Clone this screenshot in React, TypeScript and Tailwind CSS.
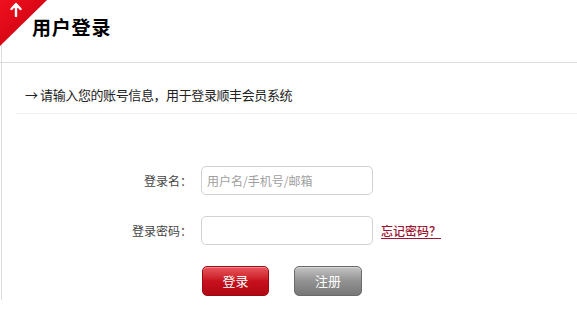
const font = { fontFamily: '"Noto Sans CJK SC", sans-serif' }

function Corner() {
  return (
    <div className="absolute left-0 top-0 w-[47px] h-[46px] bg-gradient-to-br from-[#f0101e] to-[#c3000d] [clip-path:polygon(0_0,100%_0,0_100%)]">
      <svg width="12" height="14" viewBox="0 0 12 14" className="absolute left-[10px] top-[3px]">
        <path d="M6 1 L1.5 6 M6 1 L10.5 6 M6 1 V13" stroke="#fff" strokeWidth="2.4" fill="none" strokeLinecap="round" />
      </svg>
    </div>
  )
}

function Field({ label, placeholder, extra }: { label: string; placeholder?: string; extra?: React.ReactNode }) {
  return (
    <div className="flex items-center">
      <span className="w-[190px] text-right text-[12px] text-[#444]">{label}</span>
      <input
        className="ml-[9px] w-[172px] h-[29px] rounded-[5px] border border-[#d2d2d2] bg-white px-[5px] text-[12px] text-[#333] placeholder:text-[#a0a0a0] outline-none"
        placeholder={placeholder}
      />
      {extra}
    </div>
  )
}

export default function App() {
  return (
    <div lang="zh-CN" className="relative w-[577px] h-[313px] bg-white overflow-hidden" style={font}>
      <div className="h-[300px] border-l border-[#dcdcdc] ml-[1px]">
        <div className="h-[63px] border-b border-[#dcdcdc] -ml-[2px] flex items-center pl-[32px] pb-[7px]">
          <h1 className="text-[19px] font-bold text-black tracking-[0.8px]">用户登录</h1>
        </div>

        <p className="pt-[22px] pl-[23px] text-[13px] tracking-[-0.4px] leading-[20px] text-[#222]">→ 请输入您的账号信息，用于登录顺丰会员系统</p>
        <div className="mt-[8px] ml-[14px] h-px bg-[#eeeeee]" />

        <div className="mt-[52px] flex flex-col gap-[21px]">
          <Field label="登录名：" placeholder="用户名/手机号/邮箱" />
          <Field
            label="登录密码："
            extra={
              <a href="#" className="ml-[8px] text-[12px] font-medium text-[#9a1530] underline underline-offset-2">
                忘记密码？
              </a>
            }
          />
          <div className="flex gap-[25px] pl-[200px]">
            <button className="w-[67px] h-[30px] rounded-[5px] border border-[#9e0a14] bg-gradient-to-b from-[#e7535b] via-[#c8101e] to-[#b00814] text-white text-[13px] shadow-[inset_0_1px_0_rgba(255,255,255,0.35)]">
              登录
            </button>
            <button className="w-[68px] h-[30px] rounded-[5px] border border-[#6a6a6a] bg-gradient-to-b from-[#c4c4c4] via-[#929292] to-[#777777] text-white text-[13px] shadow-[inset_0_1px_0_rgba(255,255,255,0.35)]">
              注册
            </button>
          </div>
        </div>
      </div>
      <Corner />
    </div>
  )
}
